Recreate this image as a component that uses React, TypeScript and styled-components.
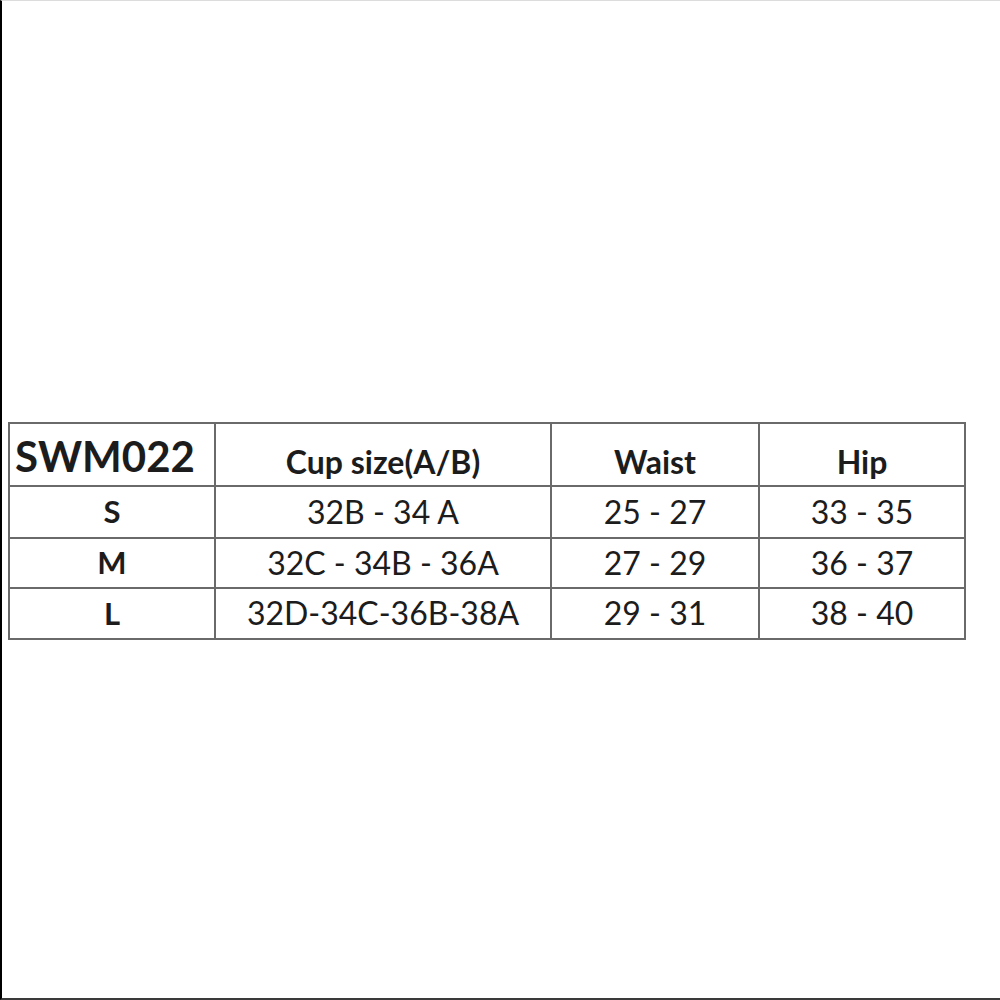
import React from 'react';
import styled, { createGlobalStyle } from 'styled-components';

const GlobalStyle = createGlobalStyle`
  html, body {
    margin: 0;
    padding: 0;
    background: #ffffff;
  }
`;

const Frame = styled.div`
  box-sizing: border-box;
  width: 1000px;
  height: 1000px;
  background: #ffffff;
  border-left: 2px solid #000000;
  border-top: 1px solid #dcdcdc;
  border-bottom: 2px solid #3a3a3a;
  padding: 421px 0 0 6px;
  font-family: Lato, 'Noto Sans', 'Liberation Sans', sans-serif;
  color: #1c1c1c;
`;

const SizeTable = styled.table`
  border-collapse: collapse;
  table-layout: fixed;
  width: 958px;
  border: 2px solid #6a6a6a;
`;

const HeadRow = styled.tr`
  height: 63px;
`;

const BodyRow = styled.tr<{ $h: number }>`
  height: ${(p) => p.$h}px;
`;

const HeadCell = styled.th<{ $big?: boolean }>`
  border: 2px solid #6a6a6a;
  padding: 0 ${(p) => (p.$big ? 14 : 0)}px 4px 0;
  text-align: center;
  vertical-align: bottom;
  font-weight: 700;
  font-size: ${(p) => (p.$big ? 42 : 32)}px;
  line-height: 1.2;
  white-space: nowrap;
`;

const LabelCell = styled.td`
  border: 2px solid #6a6a6a;
  padding: 0;
  text-align: center;
  vertical-align: middle;
  font-weight: 700;
  font-size: 31px;
  line-height: 1.2;
`;

const ValueCell = styled.td`
  border: 2px solid #6a6a6a;
  padding: 0;
  text-align: center;
  vertical-align: middle;
  font-weight: 400;
  font-size: 32px;
  line-height: 1.2;
  white-space: nowrap;
`;

const rows = [
  { size: 'S', cup: '32B - 34 A', waist: '25 - 27', hip: '33 - 35', h: 52 },
  { size: 'M', cup: '32C - 34B - 36A', waist: '27 - 29', hip: '36 - 37', h: 50 },
  { size: 'L', cup: '32D-34C-36B-38A', waist: '29 - 31', hip: '38 - 40', h: 51 },
];

export default function App() {
  return (
    <>
      <GlobalStyle />
      <Frame>
        <SizeTable>
          <colgroup>
            <col style={{ width: 206 }} />
            <col style={{ width: 336 }} />
            <col style={{ width: 208 }} />
            <col style={{ width: 206 }} />
          </colgroup>
          <thead>
            <HeadRow>
              <HeadCell $big>SWM022</HeadCell>
              <HeadCell>Cup size(A/B)</HeadCell>
              <HeadCell>Waist</HeadCell>
              <HeadCell>Hip</HeadCell>
            </HeadRow>
          </thead>
          <tbody>
            {rows.map((r) => (
              <BodyRow key={r.size} $h={r.h}>
                <LabelCell>{r.size}</LabelCell>
                <ValueCell>{r.cup}</ValueCell>
                <ValueCell>{r.waist}</ValueCell>
                <ValueCell>{r.hip}</ValueCell>
              </BodyRow>
            ))}
          </tbody>
        </SizeTable>
      </Frame>
    </>
  );
}
